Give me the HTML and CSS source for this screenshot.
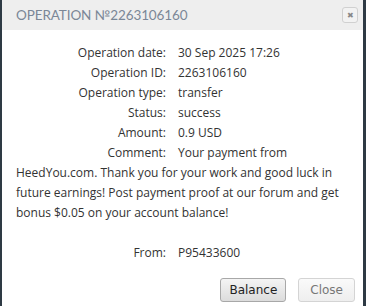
FILE: index.html
```html
<!DOCTYPE html>
<html>
<head>
    <link rel="stylesheet" href="styles.css">
</head>
<body>
    <div class="dialog">
        <div class="header">
            <span class="title">Operation №2263106160</span>
            <span class="close-x">&#10006;</span>
        </div>

        <div class="content">
            <div class="row"><span class="label">Operation date:</span><span class="value">30 Sep 2025 17:26</span></div>
            <div class="row"><span class="label">Operation ID:</span><span class="value">2263106160</span></div>
            <div class="row"><span class="label">Operation type:</span><span class="value">transfer</span></div>
            <div class="row"><span class="label">Status:</span><span class="value">success</span></div>
            <div class="row"><span class="label">Amount:</span><span class="value">0.9 USD</span></div>
            <div class="row"><span class="label">Comment:</span><span class="value">Your payment from HeedYou.com. Thank you for your work and good luck in future earnings! Post payment proof at our forum and get bonus $0.05 on your account balance!</span></div>
            <div class="row spaced"><span class="label">From:</span><span class="value">P95433600</span></div>
        </div>

        <div class="buttons">
            <button class="btn">Balance</button>
            <button class="btn btn-light">Close</button>
        </div>
    </div>
</body>
</html>
```

FILE: styles.css
```css
body {
    margin: 0;
    background-color: #2e3a44;
    font-family: "Open Sans", Arial, sans-serif;
    color: #333;
}
.dialog {
    background-color: #fff;
    margin: 0 3px 0 2px;
    height: 306px;
}
.header {
    background-color: #eeeeee;
    height: 30px;
    display: flex;
    align-items: center;
    justify-content: space-between;
    padding: 0 5px 0 14px;
}
.title {
    font-family: Lato, sans-serif;
    font-size: 13.5px;
    text-transform: uppercase;
    letter-spacing: -0.1px;
    color: #7b8797;
}
.close-x {
    width: 14px;
    height: 14px;
    border: 1px solid #d0d0d0;
    border-radius: 3px;
    background-color: #f2f2f2;
    color: #888;
    font-size: 8px;
    line-height: 14px;
    text-align: center;
}
.content {
    padding: 13px 6px 0 14px;
    font-size: 12px;
    line-height: 20px;
}
.label {
    display: inline-block;
    width: 150px;
    text-align: right;
    margin-right: 12px;
}
.spaced {
    margin-top: 20px;
}
.buttons {
    display: flex;
    justify-content: flex-end;
    gap: 12px;
    padding: 15px 8px 0 0;
}
.btn {
    font-family: "DejaVu Sans", Verdana, sans-serif;
    font-size: 12px;
    color: #222;
    height: 24px;
    padding: 0 8px;
    border: 1px solid #a8a8a8;
    border-radius: 3px;
    background: linear-gradient(#f4f4f4, #dcdcdc);
}
.btn-light {
    padding: 0 11px;
    color: #777;
    border-color: #d4d4d4;
    background: linear-gradient(#fafafa, #eeeeee);
}
```
